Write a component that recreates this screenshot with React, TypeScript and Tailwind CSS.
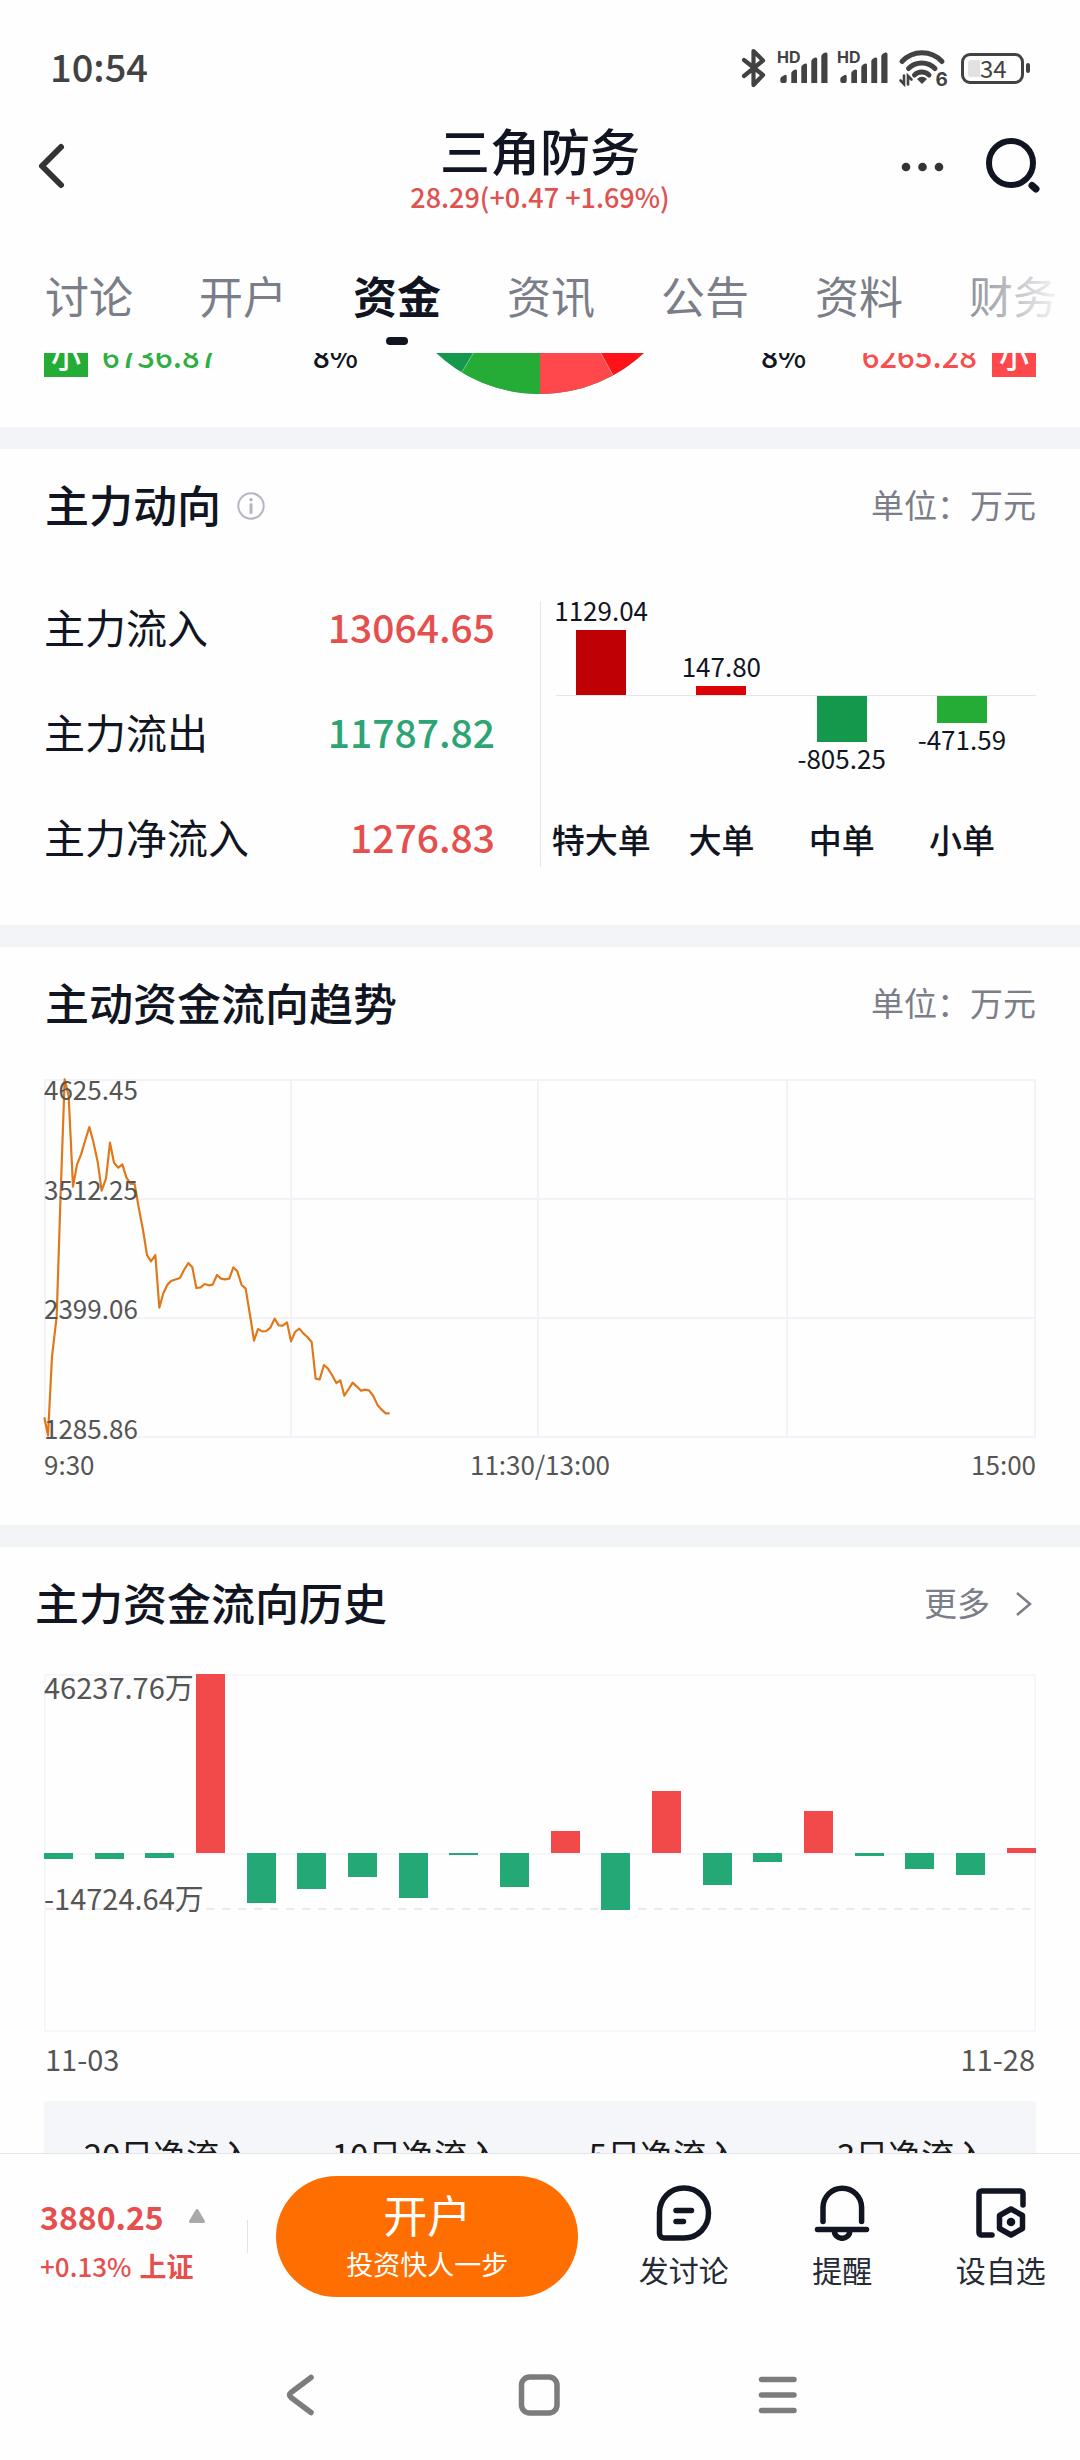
import React from "react";

const TABS = ["讨论", "开户", "资金", "资讯", "公告", "资料", "财务"];

const FLOWS = [
  { label: "主力流入", value: "13064.65", color: "text-[#e64f4d]" },
  { label: "主力流出", value: "11787.82", color: "text-[#2ca474]" },
  { label: "主力净流入", value: "1276.83", color: "text-[#e64f4d]" },
];

const ORDERS = [
  { label: "特大单", value: 1129.04, size: 65, color: "bg-[#bf0004]" },
  { label: "大单", value: 147.8, size: 9, color: "bg-[#dd0208]" },
  { label: "中单", value: -805.25, size: 46, color: "bg-[#13984c]" },
  { label: "小单", value: -471.59, size: 27, color: "bg-[#24ac37]" },
];

// Bar lengths as a share of half the chart's height; negative bars hang below the axis.
const HISTORY = [
  -3.4, -3.4, -2.8, 100, -27.8, -20, -13.4, -25.2, -1.1, -19, 12.3, -31.8, 34.8, -17.9, -5, 23.5,
  -1.7, -8.7, -12.1, 2.8,
];

const TREND =
  "43,1042 54,1096 66,860 80,740 92,370 104,28 116,78 129,350 141,284 153,254 166,210 178,171 190,215 203,275 215,362 228,326 240,218 252,278 265,293 277,283 289,322 302,342 314,342 326,412 339,480 351,555 363,574 376,555 388,713 400,670 413,643 425,632 450,624 462,600 475,579 487,592 499,654 512,652 524,642 536,646 548,644 561,615 573,626 585,628 598,626 610,592 622,604 635,645 647,656 660,735 672,812 684,777 697,784 709,783 721,773 734,746 746,766 758,767 771,757 783,814 795,786 808,776 820,790 832,801 845,816 857,926 869,928 882,885 894,896 906,915 919,939 931,931 943,977 956,957 968,938 980,949 993,962 1005,959 1017,961 1030,978 1042,1004 1055,1019 1067,1030 1079,1030";

function Signal() {
  return (
    <svg className="overflow-visible" width="52" height="38" viewBox="0 0 52 38" fill="#424242" aria-hidden="true">
      <text x="-1" y="14" fontSize="16" fontWeight="700" fontFamily="Inter, sans-serif">HD</text>
      <path d="M2.300 32v-2q0-2 4.400-4q2-.6 2 1.500V32q0 2-2 2H4.300q-2 0-2-2Z" />
      <path d="M13.300 34V24.500q0-2.500 4-4q1.700-.5 1.700 1.500V34Z" />
      <path d="M23.300 34V18.500q0-2.500 4-4q1.700-.5 1.700 1.500V34Z" />
      <path d="M33.300 34V12.500q0-2.500 4-4q1.900-.5 1.900 1.500V34Z" />
      <path d="M43.300 34V7.500q0-2.500 4-4q2.200-.5 2.200 1.500V34Z" />
    </svg>
  );
}

function StatusBar() {
  return (
    <div className="flex h-[124px] items-center justify-between pt-3 pr-[50px] pl-[50px] text-[#424242]">
      <time className="pb-1 text-[38px] font-medium leading-none">10:54</time>
      <div className="flex items-center">
        <svg width="26" height="40" viewBox="0 0 26 40" fill="none" stroke="#424242" strokeWidth="4.200" strokeLinecap="round" strokeLinejoin="round" aria-hidden="true">
          <path d="M3 12 22 27 12.500 37V3L22 12.500 3 28" />
        </svg>
        <div className="ml-[11px] flex gap-2">
          <Signal />
          <Signal />
        </div>
        <svg className="ml-[9px] overflow-visible" width="50" height="40" viewBox="0 0 50 40" fill="none" stroke="#424242" strokeWidth="5" strokeLinecap="round" aria-hidden="true">
          <path d="M3 13.500A27.200 27.200 0 0 1 43 13.500" />
          <path d="M9.500 20.500A18.500 18.500 0 0 1 36 20.500" />
          <path d="M15.500 27A10.500 10.500 0 0 1 30 27" />
          <path d="M18 31Q23 26.500 28 31L23 36Z" fill="#424242" stroke="none" />
          <path d="M5 27.500V36L1.500 32.500M9 36.500V28L12.500 31.500" strokeWidth="2.600" />
          <text x="36.500" y="37.500" fontSize="19" fontWeight="700" fontFamily="Inter, sans-serif" fill="#424242" stroke="#fefefe" strokeWidth="3" paintOrder="stroke">6</text>
        </svg>
        <div className="ml-3 flex h-[31px] w-[63px] items-center rounded-[9px] border-3 border-[#424242] p-1">
          <div className="h-full w-3 rounded-l-[3px] bg-[#e2e2e2]" />
          <span className="text-[24px] leading-5">34</span>
        </div>
        <div className="ml-[2px] h-[10px] w-1 rounded-sm bg-[#424242]" />
      </div>
    </div>
  );
}

function Header() {
  return (
    <header>
      <StatusBar />
      <div className="grid grid-cols-[1fr_auto_1fr] items-start">
        <button type="button" aria-label="返回" className="flex h-[84px] items-center pl-9">
          <svg width="32" height="50" viewBox="0 0 32 50" fill="none" stroke="#333" strokeWidth="6" strokeLinecap="round" strokeLinejoin="round">
            <path d="M25 6 6 25 25 44" />
          </svg>
        </button>
        <div className="text-center">
          <h1 className="text-[50px] font-medium leading-[50px] text-[#111522]">三角防务</h1>
          <p className="text-[27px] font-medium leading-[46px] text-[#e05250]">28.29(+0.47 +1.69%)</p>
        </div>
        <div className="flex h-[84px] items-center justify-end gap-10 pr-9">
          <button type="button" aria-label="更多操作">
            <svg width="44" height="12" viewBox="0 0 44 12" fill="#333">
              <circle cx="6" cy="7" r="4.300" />
              <circle cx="22.500" cy="7" r="4.300" />
              <circle cx="39" cy="7" r="4.300" />
            </svg>
          </button>
          <button type="button" aria-label="搜索">
            <svg width="60" height="56" viewBox="0 0 60 56" fill="none" stroke="#111522" strokeLinecap="round">
              <circle cx="27" cy="25" r="22" strokeWidth="6" />
              <path d="M48 47.500 52 51" strokeWidth="7" />
            </svg>
          </button>
        </div>
      </div>
      <nav className="relative flex gap-[66px] overflow-hidden pt-[45px] pb-2 pl-[45px]">
        {TABS.map((tab) => {
          const active = tab === "资金";
          return (
            <button
              key={tab}
              type="button"
              aria-current={active ? "page" : undefined}
              className={
                active
                  ? "shrink-0 text-[44px] font-bold leading-[60px] text-[#111522]"
                  : "shrink-0 text-[44px] leading-[60px] text-[#7b7e89]"
              }
            >
              {tab}
              <span className={active ? "mx-auto mt-3 block h-2 w-[22px] rounded-full bg-[#111522]" : "mt-3 block h-2"} />
            </button>
          );
        })}
        <div className="pointer-events-none absolute inset-y-0 right-0 w-32 bg-linear-to-r from-[#fefefe]/0 to-[#fefefe] to-90%" />
      </nav>
    </header>
  );
}

function DealShare() {
  return (
    <section className="grid h-[74px] grid-cols-[minmax(0,1fr)_auto_minmax(0,1fr)] content-end items-end px-11 pb-[33px]">
      <div className="flex items-center justify-between pr-[30px] pb-[17px]">
        <div className="flex items-center gap-[14px]">
          <span className="flex size-11 items-center justify-center bg-[#24ac37] text-[30px] font-medium leading-none text-white">小</span>
          <span className="text-[31px] font-medium leading-10 text-[#2fae41]">6736.87</span>
        </div>
        <span className="text-[30px] font-medium leading-10 text-[#111522]">8%</span>
      </div>
      <svg width="304" height="304" viewBox="388 90 304 304" aria-hidden="true">
        <circle cx="540" cy="242" r="152" fill="#13984c" />
        <path d="M540 242 461.800 372.300A152 152 0 0 0 540 394Z" fill="#24ac37" />
        <path d="M540 242V394A152 152 0 0 0 613 375.300Z" fill="#ff484b" />
        <path d="M540 242 613 375.300A152 152 0 0 0 692 242Z" fill="#ff1318" />
        <path d="M540 242 461.800 372.300M540 242 613 375.300" stroke="#fff" strokeOpacity=".4" />
      </svg>
      <div className="flex items-center justify-between pb-[17px] pl-[69px]">
        <span className="text-[30px] font-medium leading-10 text-[#111522]">8%</span>
        <div className="flex items-center gap-[15px]">
          <span className="text-[31px] font-medium leading-10 text-[#f5504f]">6265.28</span>
          <span className="flex size-11 items-center justify-center bg-[#ff484b] text-[30px] font-medium leading-none text-white">小</span>
        </div>
      </div>
    </section>
  );
}

function Divider() {
  return <div className="h-[22px] bg-[#f3f4f8]" />;
}

function Title({ children }: { children: React.ReactNode }) {
  return <h2 className="text-[44px] font-medium leading-none text-[#111522]">{children}</h2>;
}

function Unit() {
  return <span className="text-[33px] leading-none text-[#7b7e89]">单位：万元</span>;
}

function MainForce() {
  return (
    <section>
      <div className="flex h-[110px] items-center pr-11 pl-[45px]">
        <Title>主力动向</Title>
        <button type="button" aria-label="说明" className="mt-1 ml-4">
          <svg width="28" height="28" viewBox="0 0 28 28" fill="none" stroke="#b4b6c1" strokeWidth="2" strokeLinecap="round">
            <circle cx="14" cy="14" r="12.700" />
            <path d="M14 12.500V20.500" strokeWidth="3" />
            <circle cx="14" cy="7.800" r="1.800" fill="#b4b6c1" stroke="none" />
          </svg>
        </button>
        <div className="ml-auto flex">
          <Unit />
        </div>
      </div>
      <div className="grid grid-cols-2 px-11 pt-[15px] pb-[36px]">
        <dl className="pr-[45px]">
          {FLOWS.map((f) => (
            <div key={f.label} className="flex h-[105px] items-center justify-between">
              <dt className="text-[41px] leading-none text-[#111522]">{f.label}</dt>
              <dd className={"text-[39px] font-medium leading-none " + f.color}>{f.value}</dd>
            </div>
          ))}
        </dl>
        <div className="mt-[27px] h-[266px] border-l border-[#e6e6e8] text-[26px] leading-8 text-[#111522]">
          <div className="grid h-[94px] grid-cols-4 grid-rows-1 pr-[14px]">
            {ORDERS.map((o) => (
              <div key={o.label} className="flex min-h-0 flex-col items-center justify-end">
                {o.value > 0 && (
                  <>
                    <span className="mb-1">{o.value.toFixed(2)}</span>
                    <div className={"w-[50px] shrink-0 " + o.color} style={{ height: o.size }} />
                  </>
                )}
              </div>
            ))}
          </div>
          <div className="ml-[15px] h-px bg-[#e6e6e8]" />
          <div className="grid h-[125px] grid-cols-4 pr-[14px]">
            {ORDERS.map((o) => (
              <div key={o.label} className="flex flex-col items-center">
                {o.value < 0 && (
                  <>
                    <div className={"w-[50px] shrink-0 " + o.color} style={{ height: o.size }} />
                    <span>{o.value.toFixed(2)}</span>
                  </>
                )}
              </div>
            ))}
          </div>
          <div className="grid grid-cols-4 pr-[14px] text-center text-[33px] font-medium leading-9">
            {ORDERS.map((o) => (
              <span key={o.label} className="whitespace-nowrap">{o.label}</span>
            ))}
          </div>
        </div>
      </div>
    </section>
  );
}

function Trend() {
  return (
    <section className="pb-[41px]">
      <div className="flex h-[110px] items-center justify-between pr-11 pl-[45px]">
        <Title>主动资金流向趋势</Title>
        <Unit />
      </div>
      <div className="relative mx-11 mt-[22px] h-[359px]">
        <svg className="block h-full w-full overflow-visible" viewBox="42 27 2976 1077" preserveAspectRatio="none" fill="none" role="img" aria-label="主动资金流向趋势">
          <g stroke="#f1f3f8" strokeWidth="6">
            <path d="M42 30H3018M42 387H3018M42 744H3018M42 1101H3018" />
            <path d="M45 27V1104M783 27V1104M1524 27V1104M2271 27V1104M3015 27V1104" />
          </g>
          <polyline points={TREND} stroke="#e07718" strokeWidth="6.500" strokeLinejoin="round" />
        </svg>
        <div className="absolute inset-0 grid grid-rows-3 text-[26px] leading-5 text-[#555]">
          <div className="flex flex-col justify-between">
            <span>4625.45</span>
            <span>3512.25</span>
          </div>
          <span className="self-end">2399.06</span>
          <span className="self-end">1285.86</span>
        </div>
      </div>
      <div className="mt-[6px] flex justify-between px-11 text-[26px] leading-10 text-[#555]">
        <span className="flex-1">9:30</span>
        <span>11:30/13:00</span>
        <span className="flex-1 text-right">15:00</span>
      </div>
    </section>
  );
}

function History() {
  return (
    <section>
      <div className="flex h-[110px] items-center justify-between pr-[46px] pl-[35px]">
        <Title>主力资金流向历史</Title>
        <a href="#history" className="flex items-center gap-6 text-[33px] leading-none text-[#7b7e89]">
          更多
          <svg className="mt-1" width="20" height="28" viewBox="0 0 20 28" fill="none" stroke="#7b7e89" strokeWidth="2.500">
            <path d="M3 3 16 14 3 25" />
          </svg>
        </a>
      </div>
      <div className="relative mx-11 mt-[17px] h-[358px] border-2 border-[#f3f6fa] text-[29px] leading-6 text-[#555]">
        <div className="absolute inset-x-0 top-1/2 h-[2px] bg-[#f3f6fa]" />
        <div className="absolute inset-x-0 top-[65.500%] h-[2px] bg-[repeating-linear-gradient(90deg,#ebebeb_0_8px,transparent_8px_16px)]" />
        <div className="absolute -inset-[2px] flex justify-between">
          {HISTORY.map((v, i) => (
            <div key={i} className="grid w-[29px] grid-rows-2">
              <div className="flex items-end">
                {v > 0 && <div className="w-full bg-[#f24a4a]" style={{ height: `${v}%` }} />}
              </div>
              <div>{v < 0 && <div className="w-full bg-[#24a876]" style={{ height: `${-v}%` }} />}</div>
            </div>
          ))}
        </div>
        <div className="absolute -inset-[2px] flex flex-col">
          <span className="h-[59%]">46237.76万</span>
          <span>-14724.64万</span>
        </div>
      </div>
      <div className="mt-[6px] flex justify-between px-[45px] text-[29px] leading-10 text-[#555]">
        <span>11-03</span>
        <span>11-28</span>
      </div>
      <table className="mx-11 mt-[23px] w-[calc(100%-88px)] table-fixed bg-[#f5f6fa]">
        <thead>
          <tr className="h-[106px] text-[33px] leading-none text-[#1a1a1a]">
            {["20日净流入", "10日净流入", "5日净流入", "3日净流入"].map((h) => (
              <th key={h} scope="col" className="text-center font-normal whitespace-nowrap">{h}</th>
            ))}
          </tr>
        </thead>
      </table>
    </section>
  );
}

function Action({ label, children }: { label: string; children: React.ReactNode }) {
  return (
    <button type="button" className="flex flex-col items-center pt-[9px] text-[30px] leading-10 text-[#262a36]">
      <svg className="mb-2" width="56" height="56" viewBox="0 0 56 56" fill="none" stroke="#111522" strokeWidth="5.500" strokeLinecap="round" strokeLinejoin="round" aria-hidden="true">
        {children}
      </svg>
      {label}
    </button>
  );
}

function BottomBar() {
  return (
    <footer className="border-t border-[#e4e5e9]">
      <div className="flex items-stretch pt-[22px]">
        <button type="button" className="ml-10 w-[207px] pt-2 text-left text-[#e64f4d]">
          <span className="flex items-center text-[32px] font-bold leading-[49px]">
            3880.25
            <svg className="ml-6" width="18" height="16" viewBox="0 0 18 16" fill="#a9a9a9" stroke="#a9a9a9" strokeWidth="3" strokeLinejoin="round">
              <path d="M9 2.500 15.500 13.500H2.500Z" />
            </svg>
          </span>
          <span className="flex items-center gap-2 text-[26px] font-medium leading-[49px]">
            +0.13%<span className="text-[27px] font-bold">上证</span>
          </span>
        </button>
        <div className="h-[33px] w-px self-center bg-[#e3e3e5]" />
        <button type="button" className="ml-7 h-[121px] w-[28%] rounded-full bg-[#ff6e00] pt-1 text-center text-white">
          <span className="block text-[44px] leading-[49px]">开户</span>
          <span className="block text-[27px] leading-[49px]">投资快人一步</span>
        </button>
        <div className="ml-[26px] grid flex-1 grid-cols-3">
          <Action label="发讨论">
            <path d="M3.500 28C3.500 14 14 3 28 3S52.500 14 52.500 28 42 53 28 53H8a4.500 4.500 0 0 1-4.500-4.500ZM20 25.500H35.500M20 36.500H27.500" />
          </Action>
          <Action label="提醒">
            <path d="M9 36.500V22.500a19.300 19.300 0 0 1 38.600 0V36.500M3.500 44.500H52.500M20.500 46.500a7.600 6.800 0 0 0 15.200 0" />
          </Action>
          <Action label="设自选">
            <path d="M50 20V8.500a2.500 2.500 0 0 0-2.500-2.500H8.500A2.500 2.500 0 0 0 6 8.500V47.500A2.500 2.500 0 0 0 8.500 50H19" />
            <path d="M38 24 49.500 30.500V43.500L38 50 26.500 43.500V30.500Z" />
            <circle cx="38" cy="37" r="4.300" fill="#111522" stroke="none" />
          </Action>
        </div>
      </div>
      <nav className="flex justify-center gap-[193px] pt-[76px] pb-[43px]" aria-label="系统导航">
        <button type="button" aria-label="返回">
          <svg width="46" height="44" viewBox="0 0 46 44" fill="none" stroke="#7c7c7c" strokeWidth="5.500" strokeLinecap="round" strokeLinejoin="round">
            <path d="M33 4.500 13 19.500Q10 22 13 24.500L33 39.500" />
          </svg>
        </button>
        <button type="button" aria-label="主页">
          <svg width="46" height="44" viewBox="0 0 46 44" fill="none" stroke="#7c7c7c" strokeWidth="5.500">
            <rect x="4.500" y="4" width="35.500" height="36" rx="8" />
          </svg>
        </button>
        <button type="button" aria-label="最近任务">
          <svg width="46" height="44" viewBox="0 0 46 44" fill="none" stroke="#7c7c7c" strokeWidth="5.500" strokeLinecap="round">
            <path d="M5.500 6.500H38M5.500 22H38M5.500 37.500H38" />
          </svg>
        </button>
      </nav>
    </footer>
  );
}

export default function App() {
  return (
    <div className="flex h-screen flex-col overflow-hidden bg-[#fefefe] font-['Noto_Sans_CJK_SC',sans-serif]">
      <Header />
      <main className="min-h-0 flex-1 overflow-hidden">
        <DealShare />
        <Divider />
        <MainForce />
        <Divider />
        <Trend />
        <Divider />
        <History />
      </main>
      <BottomBar />
    </div>
  );
}
